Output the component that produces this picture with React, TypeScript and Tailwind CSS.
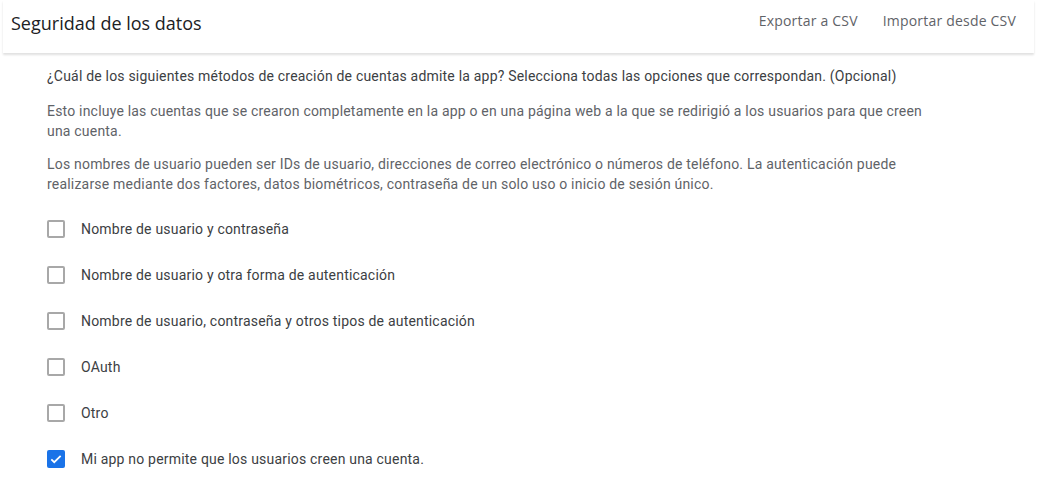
import React, { useState } from 'react';

const options = [
    'Nombre de usuario y contraseña',
    'Nombre de usuario y otra forma de autenticación',
    'Nombre de usuario, contraseña y otros tipos de autenticación',
    'OAuth',
    'Otro',
    'Mi app no permite que los usuarios creen una cuenta.',
];

const Checkbox: React.FC<{ checked: boolean; onChange: () => void }> = ({ checked, onChange }) => (
    <button
        type="button"
        onClick={onChange}
        className={`w-[18px] h-[18px] shrink-0 rounded-[2px] flex items-center justify-center ${checked ? 'bg-[#1a73e8]' : 'border-2 border-[#a8a8a8] bg-white'}`}
        aria-checked={checked}
        role="checkbox"
    >
        {checked && (
            <svg width="14" height="14" viewBox="0 0 24 24" fill="none">
                <path d="M4 12.5l5 5L20 6.5" stroke="white" strokeWidth="3" />
            </svg>
        )}
    </button>
);

const App: React.FC = () => {
    const [checked, setChecked] = useState<boolean[]>([false, false, false, false, false, true]);

    const toggle = (i: number) => {
        setChecked(prev => prev.map((v, j) => (j === i ? !v : v)));
    };

    return (
        <div className="min-h-screen bg-white font-['Roboto',sans-serif]">
            <header className="h-[53px] flex items-center justify-between pl-[11px] pr-[18px] mx-[3px] shadow-[0_2px_2px_rgba(0,0,0,0.12)] bg-white">
                <h1 className="text-[18px] text-[#202124] font-['Open_Sans',sans-serif] -ml-[3px] pb-[7px]">Seguridad de los datos</h1>
                <div className="flex items-center gap-[25px] pb-[13px] text-[14px] tracking-[0.2px] text-[#5f6368] font-['Open_Sans',sans-serif] font-medium">
                    <button type="button">Exportar a CSV</button>
                    <button type="button">Importar desde CSV</button>
                </div>
            </header>
            <main className="pl-[47px] pr-[110px] pt-[13px] text-[14px] leading-[20px] tracking-[0.2px]">
                <p className="text-[#3c4043]">¿Cuál de los siguientes métodos de creación de cuentas admite la app? Selecciona todas las opciones que correspondan. (Opcional)</p>
                <p className="mt-[15px] text-[#5f6368] max-w-[880px]">Esto incluye las cuentas que se crearon completamente en la app o en una página web a la que se redirigió a los usuarios para que creen una cuenta.</p>
                <p className="mt-[13px] text-[#5f6368] max-w-[880px]">Los nombres de usuario pueden ser IDs de usuario, direcciones de correo electrónico o números de teléfono. La autenticación puede realizarse mediante dos factores, datos biométricos, contraseña de un solo uso o inicio de sesión único.</p>
                <ul className="mt-[25px] flex flex-col gap-[26px]">
                    {options.map((label, i) => (
                        <li key={label} className="flex items-center gap-[16px] h-[20px] text-[#3c4043]">
                            <Checkbox checked={checked[i]} onChange={() => toggle(i)} />
                            <span>{label}</span>
                        </li>
                    ))}
                </ul>
            </main>
        </div>
    );
};

export default App;
